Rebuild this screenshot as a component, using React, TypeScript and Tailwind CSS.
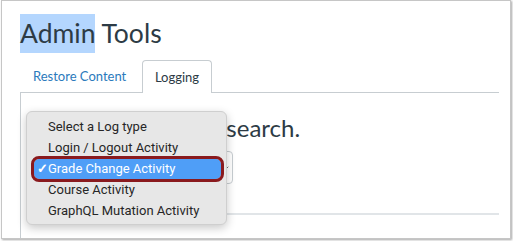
import { ChevronDown } from 'lucide-react'

const LOG_TYPES = [
  'Select a Log type',
  'Login / Logout Activity',
  'Grade Change Activity',
  'Course Activity',
  'GraphQL Mutation Activity',
]

const SELECTED = 'Grade Change Activity'

function LogMenu() {
  return (
    <div className="absolute left-[24px] top-[110px] w-[201px] h-[114px] rounded-[6px] bg-[#e7e7e7] border border-[#cfcfcf] shadow-[0_3px_10px_rgba(0,0,0,0.22)] pt-[5px] font-['Roboto',sans-serif] text-[13px] text-[#262626]">
      {LOG_TYPES.map((t) => {
        const active = t === SELECTED
        return (
          <div key={t} className="h-[21px] pl-[7px] pr-[5px]">
            <div
              className={`relative h-[20px] flex items-center pl-[14px] rounded-[5px] ${
                active ? 'bg-[#4f9ef7] text-white outline-[3px] outline-solid outline-[#8a1a1e]' : ''
              }`}
            >
              {active && <span className="absolute left-[3px] top-0 leading-[20px] text-[13px] font-bold">✓</span>}
              <span className="leading-[20px]">{t}</span>
            </div>
          </div>
        )
      })}
    </div>
  )
}

export default function App() {
  return (
    <div className="w-[513px] h-[241px] bg-white font-['Lato',sans-serif] text-[#2d3b45]">
      <div className="relative ml-[1px] w-[510px] h-[239px] border border-[#c6c6c6] shadow-[1px_1px_2px_rgba(0,0,0,0.35)] overflow-hidden bg-white">
        <div className="pl-[18px] pt-[13px] w-[497px]">
          <h1 className="h-[39px] text-[26.5px] leading-[39px] font-normal">
            <span className="inline-block bg-[#b4d6fe]">Admin</span> Tools
          </h1>

          <div className="mt-[7px] flex h-[32px]">
            <div className="w-[122px] pl-[13px] pt-[2px] flex items-center text-[13px] text-[#2b7abc]">Restore Content</div>
            <div className="relative z-10 w-[70px] h-[33px] pt-[2px] border border-b-0 border-[#c7cdd1] rounded-t-[4px] bg-white flex items-center justify-center text-[13px] -mb-px">
              Logging
            </div>
          </div>

          <div className="h-[150px] border-t border-l border-[#c7cdd1] pt-[21px]">
            <h2 className="pl-[51px] text-[24px] leading-[28px] font-normal">Select a log to search.</h2>
            <div className="ml-[12px] mt-[9px] w-[200px] h-[33px] border border-[#c7cdd1] rounded-[4px] flex items-center justify-end pr-[2px]">
              <ChevronDown className="w-[8px] h-[8px] text-[#555]" strokeWidth={2.5} />
            </div>
            <div className="ml-[12px] mt-[29px] h-[2px] bg-[#e1e5e8]" />
          </div>
        </div>

        <LogMenu />
      </div>
    </div>
  )
}
